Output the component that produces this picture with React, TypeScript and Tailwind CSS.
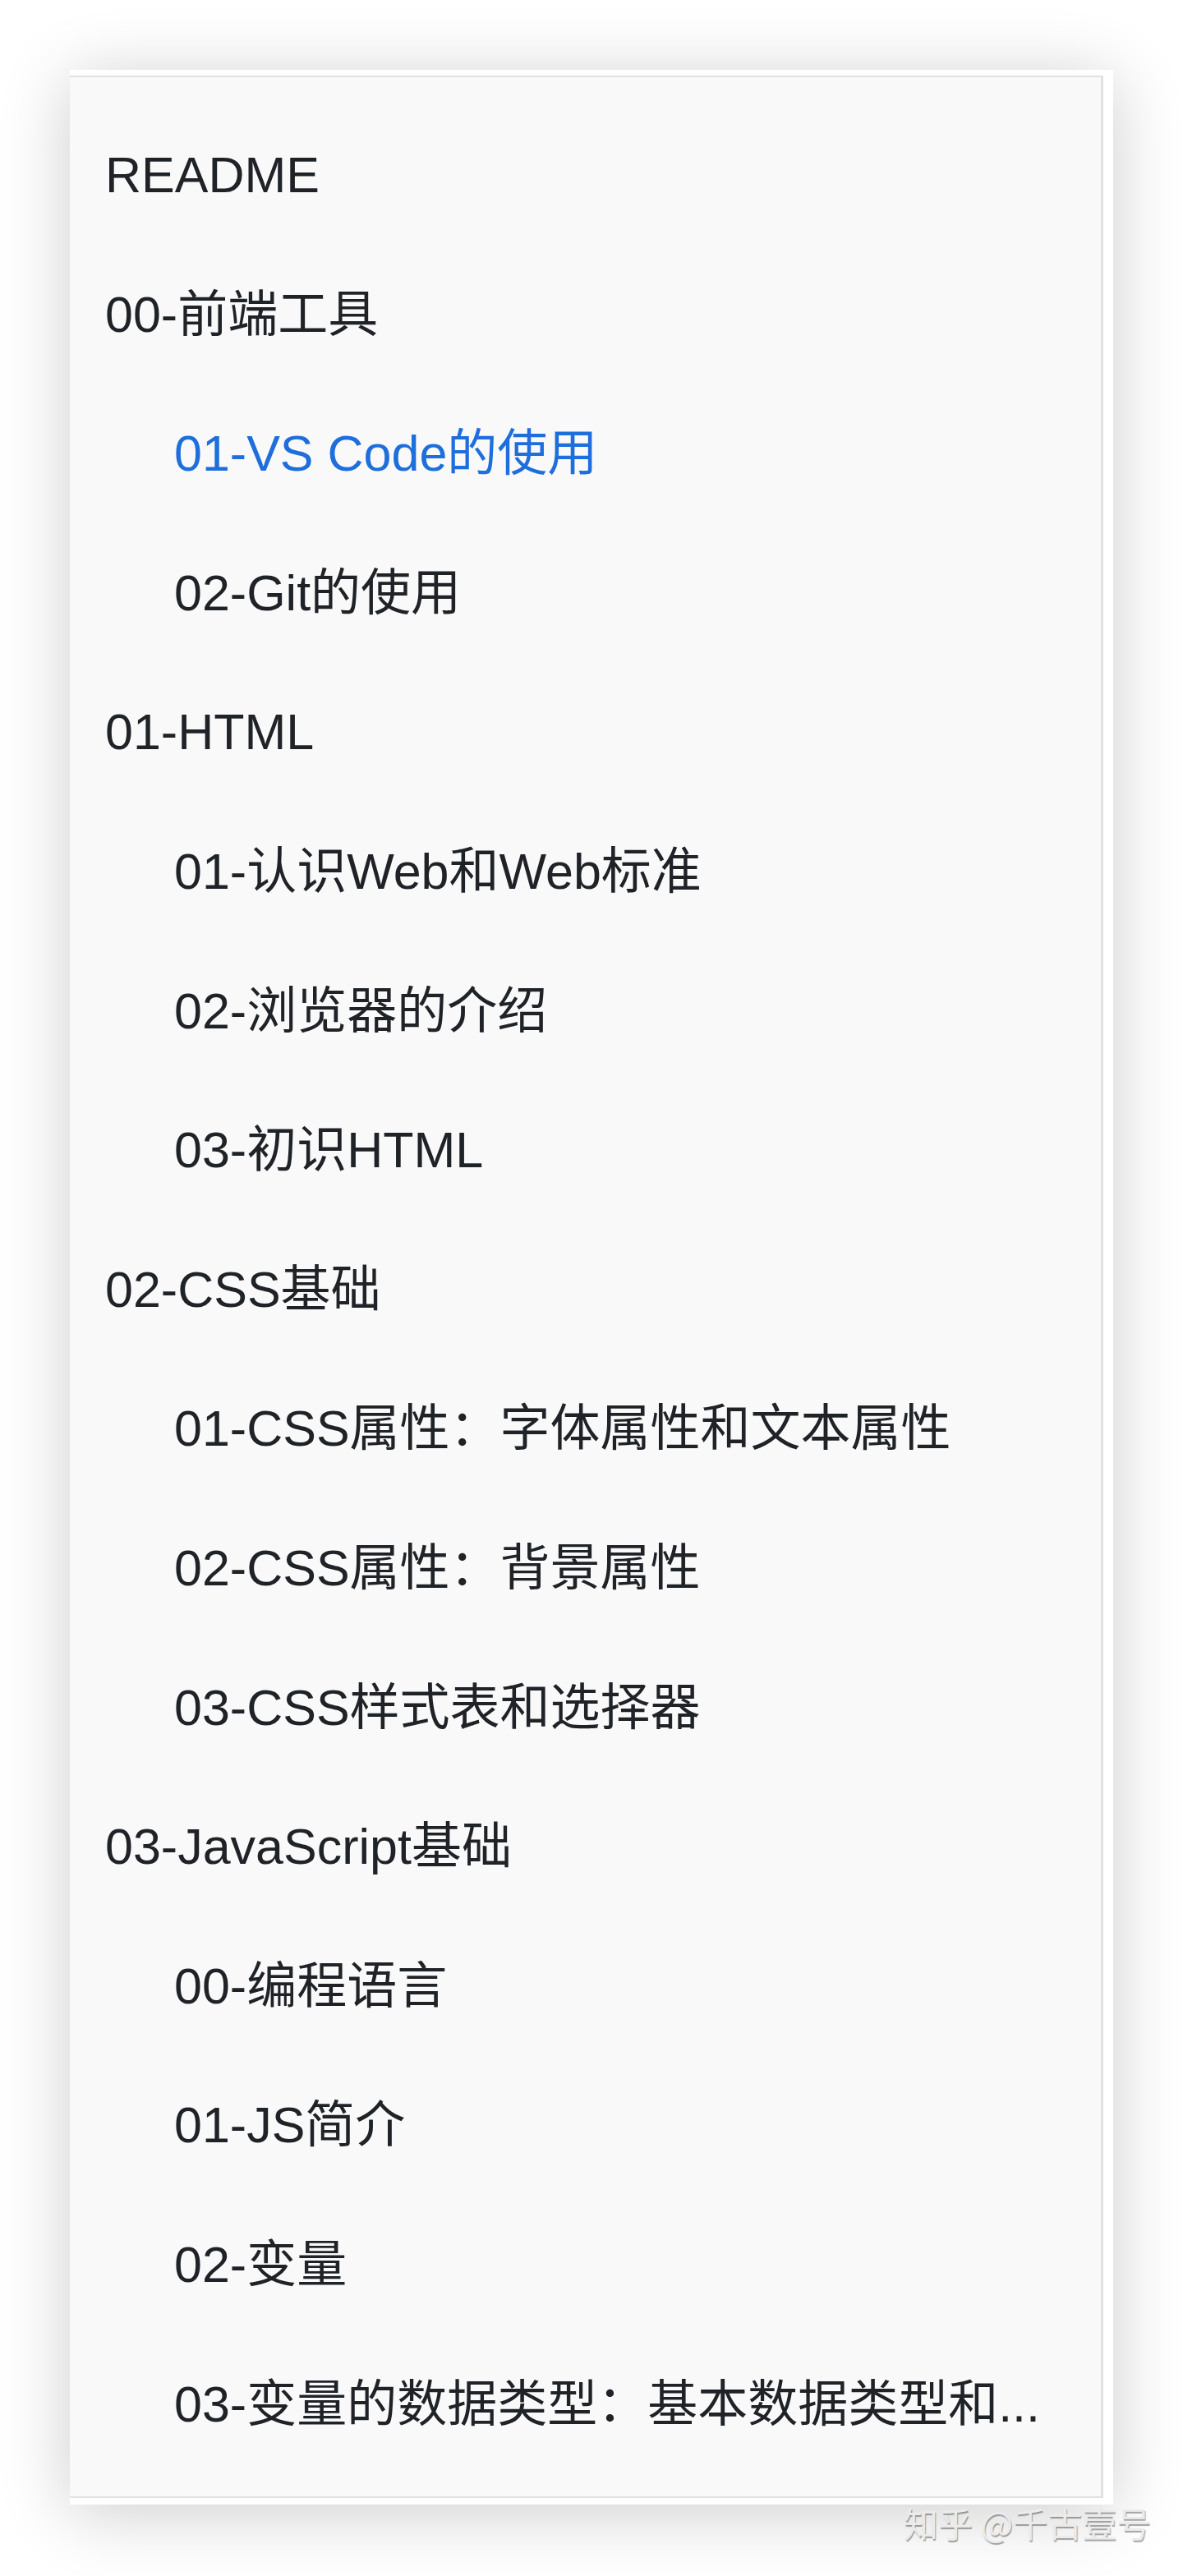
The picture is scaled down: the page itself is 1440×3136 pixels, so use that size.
const ITEMS: { label: string; level: number; active?: boolean }[] = [
  { label: "README", level: 0 },
  { label: "00-前端工具", level: 0 },
  { label: "01-VS Code的使用", level: 1, active: true },
  { label: "02-Git的使用", level: 1 },
  { label: "01-HTML", level: 0 },
  { label: "01-认识Web和Web标准", level: 1 },
  { label: "02-浏览器的介绍", level: 1 },
  { label: "03-初识HTML", level: 1 },
  { label: "02-CSS基础", level: 0 },
  { label: "01-CSS属性：字体属性和文本属性", level: 1 },
  { label: "02-CSS属性：背景属性", level: 1 },
  { label: "03-CSS样式表和选择器", level: 1 },
  { label: "03-JavaScript基础", level: 0 },
  { label: "00-编程语言", level: 1 },
  { label: "01-JS简介", level: 1 },
  { label: "02-变量", level: 1 },
  { label: "03-变量的数据类型：基本数据类型和...", level: 1 },
];

export default function App() {
  return (
    <div className="relative w-[1440px] h-[3136px] overflow-hidden bg-white font-['Liberation_Sans','Noto_Sans_CJK_SC',sans-serif]">
      <div className="pl-[85px] pt-[85px]">
        <div className="w-[1270px] bg-white pt-[7px] pr-[12px] pb-[8px] shadow-[0_10px_80px_rgba(0,0,0,0.2)]">
          <ul className="border-t-2 border-r-[3px] border-b-2 border-[#e1e1e1] bg-[#f9f9f9] pt-[35px] pb-[27px] pl-[43px]">
            {ITEMS.map((item) => (
              <li
                key={item.label}
                className={
                  "whitespace-nowrap text-[61px] leading-[169.6px] " +
                  (item.level === 1 ? "pl-[84px] " : "") +
                  (item.active ? "text-[#1e6edc]" : "text-[#1f2328]")
                }
              >
                {item.label}
              </li>
            ))}
          </ul>
        </div>
      </div>

      {/* watermark */}
      <div className="absolute left-[1100px] top-[3050px] whitespace-nowrap text-[42px] leading-none text-[#ebebeb] font-['Noto_Sans_CJK_SC',sans-serif] [text-shadow:1px_2px_1px_rgba(0,0,0,0.35)]">
        知乎 @千古壹号
      </div>
    </div>
  );
}
